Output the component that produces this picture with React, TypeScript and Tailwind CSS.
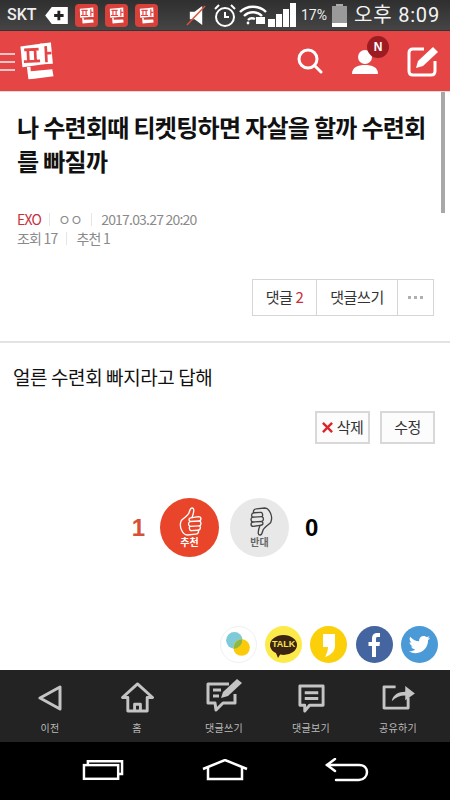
import type { ReactNode } from 'react'

const ko = '"Noto Sans CJK KR", "Noto Sans", sans-serif'
const latin = '"Liberation Sans", sans-serif'

function PanLogo({ className }: { className?: string }) {
  return (
    <svg viewBox="0 0 38 40" className={className}>
      <path d="M2 3 L26 1 L27 24 L3 26 Z" fill="#fff" />
      <path d="M24 1 L36 0 L37 24 L26 24 Z" fill="#fff" />
      <path d="M8 26 L12 26 L12 31 L36 30 L37 38 L9 40 Z" fill="#fff" />
      <path d="M6 7 H22 M10 7 V20 M18 7 V20 M5 20 H23" stroke="#e64545" strokeWidth="3" fill="none" />
      <path d="M30 4 V22 M30 12 H36" stroke="#e64545" strokeWidth="3" fill="none" />
    </svg>
  )
}

function PanBadge() {
  return (
    <div className="w-[23px] h-[23px] rounded-[4px] bg-[#d9403a] flex items-center justify-center">
      <PanLogo className="w-[15px] h-[17px]" />
    </div>
  )
}

function StatusBar() {
  return (
    <div className="h-[31px] bg-gradient-to-b from-[#2f2f2f] to-[#454545] flex items-center text-white shrink-0 border-b border-[#333]">
      <span className="ml-[7px] w-[31px] text-[16px] font-medium leading-none text-[#eee]" style={{ fontFamily: 'Roboto, sans-serif' }}>SKT</span>
      <svg viewBox="0 0 24 18" className="w-[23px] h-[17px] ml-[7px]">
        <path d="M0 9 L7 0 H24 V18 H7 Z" fill="#fff" />
        <path d="M14.5 4 V14 M9.5 9 H19.5" stroke="#222" strokeWidth="3" />
      </svg>
      <div className="flex gap-[7px] ml-[7px]">
        <PanBadge />
        <PanBadge />
        <PanBadge />
      </div>
      <svg viewBox="0 0 22 24" className="w-[21px] h-[23px] ml-[28px]">
        <path d="M4 8 H9 L17 2 V22 L9 16 H4 Z" fill="#fff" />
        <path d="M1 22 L20 2" stroke="#d9533a" strokeWidth="1.5" />
      </svg>
      <svg viewBox="0 0 24 24" className="w-[24px] h-[24px] ml-[6px]" fill="none" stroke="#fff" strokeWidth="2">
        <circle cx="12" cy="14" r="9" />
        <path d="M12 9 V14 H16 M2 6 L6 2 M18 2 L22 6" />
      </svg>
      <svg viewBox="0 0 28 20" className="w-[28px] h-[20px] ml-[2px]" fill="none" stroke="#fff" strokeWidth="2.4">
        <path d="M1 7 C8 0 20 0 27 7 M5 11 C10 6 18 6 23 11 M9 15 C11 13 14 13 16 14" />
        <rect x="17" y="12" width="9" height="7" fill="#fff" stroke="none" />
        <circle cx="9" cy="18" r="1.4" fill="#fff" stroke="none" />
      </svg>
      <div className="flex items-end gap-[1px] h-[24px] ml-[1px]">
        <div className="w-[7px] h-[8px] bg-white" />
        <div className="w-[6px] h-[13px] bg-white" />
        <div className="w-[6px] h-[18px] bg-white" />
        <div className="w-[6px] h-[24px] bg-white" />
      </div>
      <span className="ml-[5px] text-[14px] leading-none text-[#eee]" style={{ fontFamily: 'Roboto, sans-serif' }}>17%</span>
      <div className="ml-[5px] w-[15px] h-[23px] flex flex-col items-center">
        <div className="w-[7px] h-[2px] bg-[#aaa]" />
        <div className="w-[15px] h-[17px] bg-[#9a9a9a]" />
        <div className="w-[15px] h-[4px] bg-white" />
      </div>
      <span className="ml-[7px] text-[20px] leading-none tracking-[0.8px] text-[#f4f4f4]" style={{ fontFamily: `Roboto, ${ko}` }}>오후 8:09</span>
    </div>
  )
}

function Header() {
  return (
    <div className="h-[60px] bg-[#e64545] flex items-center shrink-0 border-b border-[#dcdcdc] box-content">
      <div className="flex flex-col gap-[6px] w-[15px] mt-[1px]">
        <div className="h-[2px] bg-[#f6c4c4]" />
        <div className="h-[2px] bg-[#f6c4c4]" />
        <div className="h-[2px] bg-[#f6c4c4]" />
      </div>
      <PanLogo className="w-[37px] h-[36px] ml-[3px] rotate-[-3deg]" />
      <svg viewBox="0 0 26 26" className="w-[26px] h-[26px] ml-[242px]" fill="none" stroke="#fff" strokeWidth="3" strokeLinecap="round">
        <circle cx="11" cy="11" r="9" />
        <path d="M18 18 L24 24" />
      </svg>
      <div className="relative w-[26px] h-[26px] ml-[29px]">
        <svg viewBox="0 0 26 26" className="w-[26px] h-[26px]" fill="#fff">
          <circle cx="13" cy="9" r="7" />
          <path d="M0 26 C0 19 6 17 13 17 C20 17 26 19 26 26 Z" />
        </svg>
        <div className="absolute -top-[12px] left-[15px] w-[22px] h-[22px] rounded-full bg-[#9d1c22] text-white text-[12px] font-bold flex items-center justify-center" style={{ fontFamily: latin }}>N</div>
      </div>
      <svg viewBox="0 0 32 32" className="w-[32px] h-[32px] ml-[29px]" fill="none">
        <path d="M17 4 H6 Q2 4 2 8 V26 Q2 30 6 30 H24 Q28 30 28 26 V16" stroke="#fff" strokeWidth="3" />
        <path d="M9 23 L11 16 L26 2 L31 7 L16 21 Z" fill="#fff" />
      </svg>
    </div>
  )
}

// hand outline, turned over for the "반대" button
function Thumb({ stroke }: { stroke: string }) {
  return (
    <svg viewBox="0 0 26 30" className="w-[26px] h-[29px]" fill="none" stroke={stroke} strokeWidth="1.4" strokeLinecap="round" strokeLinejoin="round">
      <path d="M4 14 C7 11 11 9 12 6 C13 3 13 1 15 1 C18 1 17 6 15 11 L22 10 C25 10 25 14 22.500 14.500 C25 15 25 19 22.500 19.500 C24.500 20 24 24 21.500 24 C22.500 26 21 28 19 28 L10 29 C6 29 1 21 4 14 Z" />
      <path d="M13 15 L22.500 14.500 M13 20 L22.500 19.500 M14 24.500 L21.500 24" />
      <path d="M15 11 C12 11 11 13 13 15 C11 16 11 19 13 20 C12 21 12 24 14 24.500" />
    </svg>
  )
}

function Divider({ className }: { className: string }) {
  return <span className={`w-px h-[13px] bg-[#e6e6e6] ${className}`} />
}

function Article() {
  return (
    <div className="relative flex-1 bg-white overflow-hidden" style={{ fontFamily: ko }}>
      <div className="absolute right-[5px] top-0 w-[4px] h-[121px] bg-[#a8a8a8]" />
      <div className="pl-[17px] pr-[14px] pt-[18px]">
        <h1 className="text-[24px] leading-[34px] font-bold text-[#111] tracking-[-0.7px] break-all">나 수련회때 티켓팅하면 자살을 할까 수련회를 빠질까</h1>
        <div className="mt-[32px] flex items-center text-[14px] leading-[19px] tracking-[-0.8px] text-[#8a8a8a]">
          <span className="text-[#c8303a]">EXO</span>
          <Divider className="mx-[8px]" />
          <span>ㅇㅇ</span>
          <Divider className="mx-[9px]" />
          <span>2017.03.27 20:20</span>
        </div>
        <div className="flex items-center text-[14px] leading-[19px] tracking-[-0.8px] text-[#8a8a8a]">
          <span>조회 17</span>
          <Divider className="mx-[9px]" />
          <span>추천 1</span>
        </div>
      </div>
      <div className="flex justify-end pr-[16px] mt-[31px]">
        <div className="flex h-[37px] border border-[#d5d5d5] text-[15px] tracking-[-0.4px] text-[#333] items-stretch">
          <div className="w-[63px] flex items-center justify-center">댓글&nbsp;<span className="text-[#c8303a]">2</span></div>
          <div className="w-[81px] flex items-center justify-center border-l border-[#d5d5d5]">댓글쓰기</div>
          <div className="w-[36px] flex items-center justify-center gap-[3px] border-l border-[#d5d5d5]">
            <span className="w-[3px] h-[3px] bg-[#b0b0b0]" />
            <span className="w-[3px] h-[3px] bg-[#b0b0b0]" />
            <span className="w-[3px] h-[3px] bg-[#b0b0b0]" />
          </div>
        </div>
      </div>
      <div className="h-[2px] bg-[#e3e3e3] mt-[25px]" />
      <p className="pl-[13px] mt-[20px] text-[19px] leading-[28px] tracking-[-0.4px] text-[#111]">얼른 수련회 빠지라고 답해</p>
      <div className="flex justify-end gap-[10px] pr-[15px] mt-[20px] text-[15px] text-[#333] tracking-[-0.5px]">
        <div className="w-[55px] h-[33px] border-2 border-[#d8d8d8] flex items-center justify-center bg-[#fcfcfc]">
          <svg viewBox="0 0 12 12" className="w-[11px] h-[11px] mr-[4px]" stroke="#d8262c" strokeWidth="2.6">
            <path d="M1 1 L11 11 M11 1 L1 11" />
          </svg>
          삭제
        </div>
        <div className="w-[55px] h-[33px] border-2 border-[#d8d8d8] flex items-center justify-center bg-[#fcfcfc]">수정</div>
      </div>
      <div className="flex items-center justify-center mt-[54px]">
        <span className="text-[24px] font-bold text-[#d9503a] mr-[15px]" style={{ fontFamily: latin }}>1</span>
        <div className="w-[59px] h-[59px] rounded-full bg-[#e8452a] flex flex-col items-center justify-center text-white text-[10px] font-bold leading-[12px]">
          <Thumb stroke="#fff" />
          <span>추천</span>
        </div>
        <div className="w-[59px] h-[59px] rounded-full bg-[#e8e8e8] flex flex-col items-center justify-center text-[#666] text-[10px] font-bold leading-[12px] ml-[11px]">
          <div className="rotate-180 ml-[4px]"><Thumb stroke="#444" /></div>
          <span>반대</span>
        </div>
        <span className="text-[24px] font-bold text-black ml-[16px]" style={{ fontFamily: latin }}>0</span>
      </div>
      <div className="absolute bottom-[7px] right-[12px] flex gap-[8.3px]">
        <div className="w-[37px] h-[37px] rounded-full bg-white border border-[#f0f0f0] flex items-center justify-center">
          <svg viewBox="0 0 30 30" className="w-[31px] h-[31px]">
            <circle cx="11" cy="11" r="8" fill="#7ecad8" />
            <circle cx="18" cy="18" r="8" fill="#fbcb0a" />
            <path d="M18.500 10 A8 8 0 0 1 10.500 19 A8 8 0 0 1 18.500 10 Z" fill="#8cb84a" />
          </svg>
        </div>
        <div className="w-[37px] h-[37px] rounded-full bg-[#fce94a] flex items-center justify-center">
          <div className="relative w-[27px] h-[20px] rounded-[50%] bg-[#3b2414] flex items-center justify-center text-[#f7e54a] text-[9px] font-bold leading-none" style={{ fontFamily: latin }}>
            TALK
            <div className="absolute -bottom-[3px] left-[6px] w-0 h-0 border-l-[2px] border-r-[3px] border-t-[5px] border-l-transparent border-r-transparent border-t-[#3b2414]" />
          </div>
        </div>
        <div className="w-[37px] h-[37px] rounded-full bg-[#fbcf0a] flex items-center justify-center">
          <svg viewBox="0 0 14 24" className="w-[14px] h-[24px]">
            <path d="M1 1 H13 V13 C13 18 9 22 3 24 C5 20 6 17 6 14 H1 Z" fill="#fff" />
          </svg>
        </div>
        <div className="w-[37px] h-[37px] rounded-full bg-[#44659f] flex items-center justify-center">
          <svg viewBox="0 0 12 24" className="w-[12px] h-[24px]">
            <path d="M4 24 V13 H0.5 V9 H4 V6 C4 2 6 0 9 0 H12 V4 H9.5 C8.5 4 8 4.5 8 6 V9 H12 L11.5 13 H8 V24 Z" fill="#fff" />
          </svg>
        </div>
        <div className="w-[37px] h-[37px] rounded-full bg-[#4a9ad8] flex items-center justify-center">
          <svg viewBox="0 0 24 24" className="w-[23px] h-[23px]" fill="#fff">
            <path d="M23 5 c-.8.4-1.700.6-2.600.7 .9-.6 1.600-1.400 2-2.500 -.9.5-1.800.9-2.900 1.100 C18.600 3.400 17.400 3 16.200 3 c-2.500 0-4.600 2-4.600 4.600 0 .4 0 .7.100 1 C7.900 8.400 4.500 6.600 2.300 3.800 c-.4.700-.6 1.500-.6 2.300 0 1.600.8 3 2 3.800 -.7 0-1.400-.2-2.100-.6 0 2.300 1.600 4.100 3.700 4.500 -.7.2-1.400.2-2.100.1 .6 1.800 2.300 3.200 4.300 3.200 C5.900 18.400 3.400 19.300 1 19 3 20.300 5.500 21 8 21 c8.300 0 12.900-6.900 12.900-12.900 0-.2 0-.4 0-.6 .8-.6 1.600-1.400 2.100-2.500 z" />
          </svg>
        </div>
      </div>
    </div>
  )
}

function NavItem({ label, children }: { label: string; children: ReactNode }) {
  return (
    <div className="flex flex-col items-center w-[86px]">
      <div className="h-[35px] flex items-end justify-center">{children}</div>
      <span className="mt-[8px] text-[10px] leading-[14px] tracking-[0.3px] text-[#bbb]">{label}</span>
    </div>
  )
}

function BottomNav() {
  const c = '#c4c4c4'
  return (
    <div className="h-[72px] bg-[#232323] shrink-0 flex justify-between pl-[7px] pr-[9px] pt-[8px]" style={{ fontFamily: ko }}>
      <NavItem label="이전">
        <svg viewBox="0 0 24 26" className="w-[24px] h-[26px] mb-[2px]" fill="none" stroke={c} strokeWidth="3" strokeLinejoin="round">
          <path d="M2 13 L22 2 V24 Z" />
        </svg>
      </NavItem>
      <NavItem label="홈">
        <svg viewBox="0 0 34 32" className="w-[33px] h-[31px]" fill="none" stroke={c} strokeWidth="3" strokeLinejoin="round">
          <path d="M1.500 16 L17 2 L32.500 16 H27 V30 H7 V16 Z" />
          <path d="M14 30 V23 H20 V30" />
        </svg>
      </NavItem>
      <NavItem label="댓글쓰기">
        <svg viewBox="0 0 38 34" className="w-[38px] h-[34px] mb-[1px]" fill="none" stroke={c} strokeWidth="3" strokeLinejoin="round">
          <path d="M24 6 H3 V25 H10 L11 32 L18 25 H30 V16" />
          <path d="M8 12 H16 M8 18 H14" />
          <path d="M16 20 L18 14 L32 1 L37 5 L23 18 Z" fill={c} stroke="none" />
        </svg>
      </NavItem>
      <NavItem label="댓글보기">
        <svg viewBox="0 0 30 30" className="w-[29px] h-[29px]" fill="none" stroke={c} strokeWidth="3" strokeLinejoin="round">
          <path d="M3 2 H27 V22 H13 L8 28 V22 H3 Z" />
          <path d="M8 9 H22 M8 15 H22" />
        </svg>
      </NavItem>
      <NavItem label="공유하기">
        <svg viewBox="0 0 36 28" className="w-[35px] h-[27px] mb-[3px]" fill="none" stroke={c} strokeWidth="3" strokeLinejoin="round">
          <path d="M15 4 H3 V26 H28 V15" />
          <path d="M11 19 C12 12 18 9 25 9 V3 L35 11 L25 18 V13 C19 13 15 15 11 19 Z" fill={c} stroke="none" />
        </svg>
      </NavItem>
    </div>
  )
}

function SoftKeys() {
  return (
    <div className="h-[58px] bg-black shrink-0 flex items-center justify-center gap-[77px] pb-[2px]">
      <svg viewBox="0 0 44 22" className="w-[43px] h-[22px]" fill="none" stroke="#fff" strokeWidth="2.500">
        <path d="M6 5 V2 H41 V15 H37" />
        <rect x="2" y="6" width="35" height="14" />
      </svg>
      <svg viewBox="0 0 46 22" className="w-[46px] h-[22px]" fill="none" stroke="#fff" strokeWidth="2.500">
        <path d="M1 10 L23 1 L45 10" />
        <path d="M6 9 V20 H40 V9" />
      </svg>
      <svg viewBox="0 0 44 24" className="w-[44px] h-[24px]" fill="none" stroke="#fff" strokeWidth="2.500" strokeLinecap="round">
        <path d="M2 7 H34 C40 7 42 11 42 14 C42 18 39 22 34 22 H11" />
        <path d="M10 1 L2 7 L10 13" />
      </svg>
    </div>
  )
}

export default function App() {
  return (
    <div className="w-[450px] h-[800px] flex flex-col overflow-hidden">
      <StatusBar />
      <Header />
      <Article />
      <BottomNav />
      <SoftKeys />
    </div>
  )
}
